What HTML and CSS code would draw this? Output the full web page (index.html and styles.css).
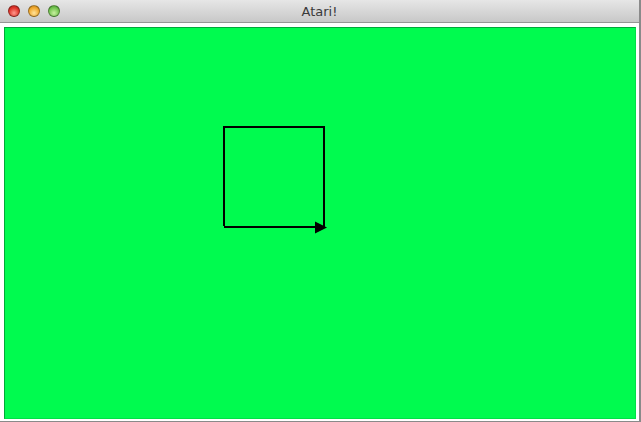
FILE: index.html
```html
<!DOCTYPE html>
<html>
<head>
<meta charset="utf-8">
<link rel="stylesheet" href="styles.css">
</head>
<body>
<div class="window">
  <div class="titlebar">
    <div class="lights">
      <span class="light red"></span>
      <span class="light yellow"></span>
      <span class="light green"></span>
    </div>
    <div class="title">Atari!</div>
  </div>
  <div class="content">
    <div class="canvas">
      <svg class="drawing" width="632" height="392" viewBox="0 0 632 392">
        <path d="M219 198 V99 H319 V199 H219" fill="none" stroke="#000" stroke-width="2"/>
        <polygon points="310,193.5 322,199.5 310,205.5" fill="#000"/>
      </svg>
    </div>
  </div>
</div>
</body>
</html>
```
FILE: styles.css
```css
html, body {
  margin: 0;
  padding: 0;
  width: 641px;
  height: 422px;
  overflow: hidden;
  background: #fff;
}
.window {
  width: 641px;
  height: 422px;
  display: flex;
  flex-direction: column;
  box-sizing: border-box;
  border-right: 2px solid #8a8a8a;
  border-bottom: 1px solid #8a8a8a;
}
.titlebar {
  position: relative;
  height: 22px;
  flex: none;
  background: linear-gradient(#e6e6e6, #c8c8c8);
  border-bottom: 1px solid #969696;
  display: flex;
  align-items: center;
  justify-content: center;
}
.lights {
  position: absolute;
  left: 8px;
  top: 5px;
  display: flex;
  gap: 8px;
}
.light {
  width: 12px;
  height: 12px;
  border-radius: 50%;
  box-sizing: border-box;
  border: 1px solid rgba(0,0,0,0.35);
}
.red { background: radial-gradient(circle at 50% 70%, #ff9a8e, #e0342a 60%, #a8201a); }
.yellow { background: radial-gradient(circle at 50% 70%, #ffe39a, #f0a82e 60%, #b87a14); }
.green { background: radial-gradient(circle at 50% 70%, #c8f0a0, #74c450 60%, #3f8f2a); }
.title {
  font-family: "Lucida Grande", "DejaVu Sans", sans-serif;
  font-size: 13px;
  color: #3a3a3a;
  padding-top: 1px;
}
.content {
  flex: 1;
  padding: 4px 3px 2px 4px;
}
.canvas {
  width: 632px;
  height: 392px;
  box-sizing: border-box;
  background: #00fb4f;
  border-left: 1px solid #00a83a;
  border-top: 1px solid #00a83a;
  border-right: 1px solid #00e048;
  border-bottom: 1px solid #00e048;
  overflow: hidden;
}
.drawing {
  display: block;
}
```
